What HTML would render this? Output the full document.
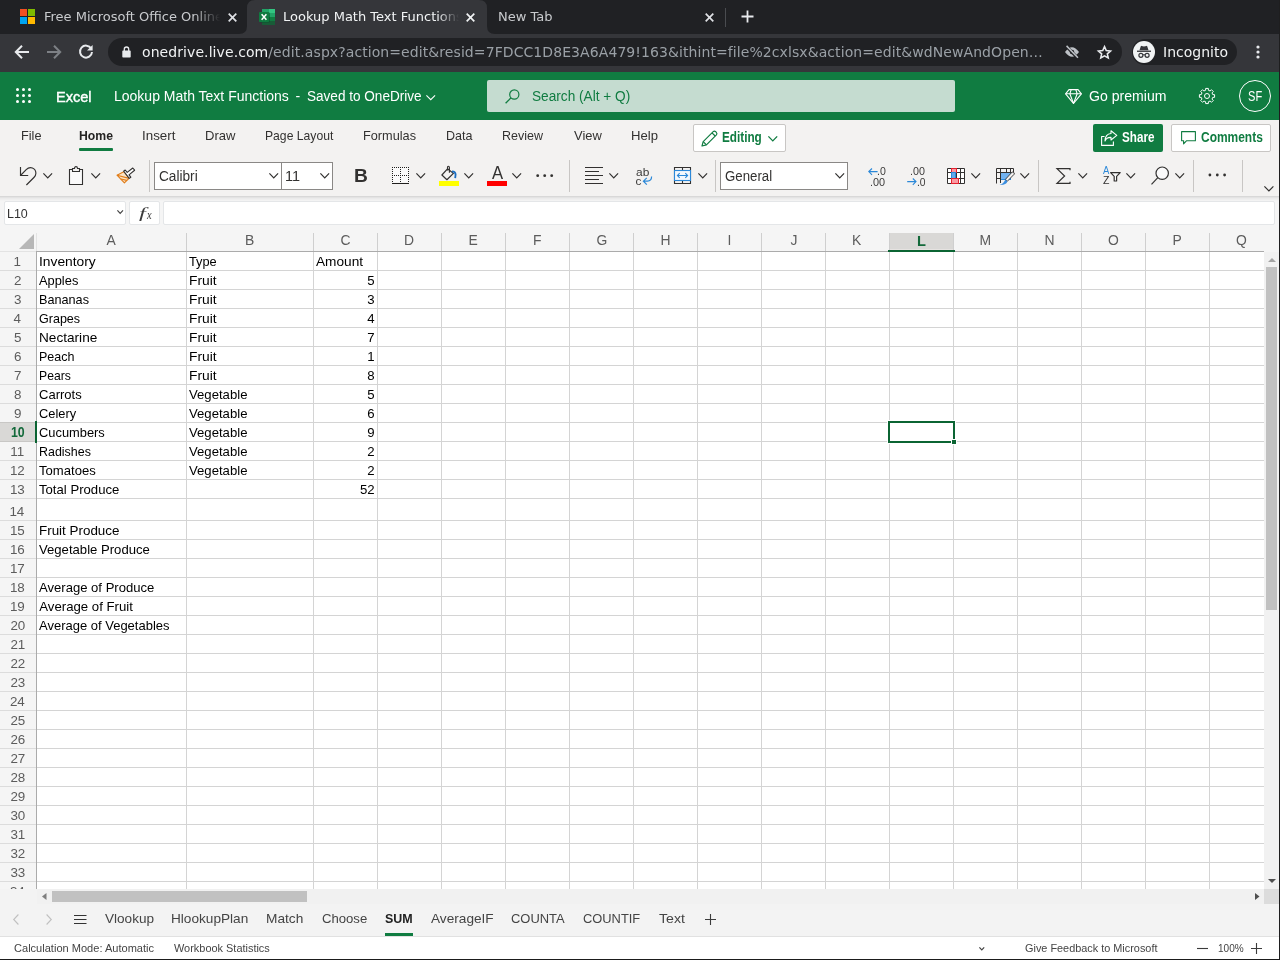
<!DOCTYPE html>
<html lang="en"><head><meta charset="utf-8"><title>Lookup Math Text Functions.xlsx - Microsoft Excel Online</title>
<style>
*{box-sizing:border-box;margin:0;padding:0}
html,body{width:1280px;height:960px;overflow:hidden;background:#fff}
body{position:relative;font-family:"Liberation Sans",sans-serif;color:#252423}
.a{position:absolute}
.t{position:absolute;white-space:pre;line-height:1}
.dj{font-family:"DejaVu Sans",sans-serif}
svg{position:absolute;overflow:visible}
/* chrome */
#tabbar{left:0;top:0;width:1280px;height:34px;background:#202124}
#toolbar{left:0;top:34px;width:1280px;height:38px;background:#35363a}
/* excel */
#xlhead{left:0;top:72px;width:1280px;height:48px;background:#107c41}
#ribbon{left:0;top:120px;width:1280px;height:76px;background:#f3f2f1}
#fbar{left:0;top:196px;width:1280px;height:37px;background:#f5f5f5}
.hl{position:absolute;height:1px;background:#d4d4d4}
.vl{position:absolute;width:1px;background:#d4d4d4}
#w{position:absolute;left:0;top:0;width:1280px;height:960px;overflow:hidden;will-change:transform}
</style></head><body><div id="w">

<!-- ===== Browser chrome ===== -->
<div class="a" id="tabbar"></div>
<div class="a" id="toolbar"></div>
<!-- active tab -->
<svg style="left:239px;top:0" width="256" height="34" viewBox="0 0 256 34"><path d="M0 34 Q8 34 8 26 V8 Q8 0 16 0 H240 Q248 0 248 8 V26 Q248 34 256 34 Z" fill="#35363a"/></svg>
<!-- tab 1 -->
<svg style="left:20px;top:9px" width="15" height="15" viewBox="0 0 15 15"><rect x="0" y="0" width="7" height="7" fill="#f25022"/><rect x="8" y="0" width="7" height="7" fill="#7fba00"/><rect x="0" y="8" width="7" height="7" fill="#00a4ef"/><rect x="8" y="8" width="7" height="7" fill="#ffb900"/></svg>
<div class="a" style="left:44px;top:0;width:176px;height:34px;overflow:hidden"><span class="t dj" style="left:0;top:10px;font-size:13px;color:#c9cbce">Free Microsoft Office Online</span><div class="a" style="right:0;top:0;width:26px;height:34px;background:linear-gradient(90deg,rgba(32,33,36,0),#202124)"></div></div>
<svg style="left:228px;top:13px" width="9" height="9" viewBox="0 0 9 9"><path d="M0.7 0.7 L8.3 8.3 M8.3 0.7 L0.7 8.3" stroke="#dfe1e5" stroke-width="1.7"/></svg>
<!-- tab 2 -->
<svg style="left:259px;top:9px" width="16" height="16" viewBox="0 0 16 16">
<rect x="3" y="0" width="7" height="4" fill="#21a366"/><rect x="10" y="0" width="6" height="4" fill="#33c481"/>
<rect x="3" y="4" width="7" height="4" fill="#107c41"/><rect x="10" y="4" width="6" height="4" fill="#21a366"/>
<rect x="3" y="8" width="7" height="4" fill="#185c37"/><rect x="10" y="8" width="6" height="4" fill="#107c41"/>
<rect x="3" y="12" width="13" height="4" fill="#185c37"/>
<rect x="1" y="3.600" width="10" height="10" rx="0.800" fill="#0a4a2b" opacity="0.550"/>
<rect x="0" y="3" width="10" height="10" rx="0.800" fill="#0f7a40"/>
<path d="M2.600 5.300 L7.400 10.700 M7.400 5.300 L2.600 10.700" stroke="#fff" stroke-width="1.500"/>
</svg>
<div class="a" style="left:283px;top:0;width:176px;height:34px;overflow:hidden"><span class="t dj" style="left:0;top:10px;font-size:13px;color:#f1f3f4">Lookup Math Text Functions</span><div class="a" style="right:0;top:0;width:22px;height:34px;background:linear-gradient(90deg,rgba(53,54,58,0),#35363a)"></div></div>
<svg style="left:466px;top:13px" width="9" height="9" viewBox="0 0 9 9"><path d="M0.7 0.7 L8.3 8.3 M8.3 0.7 L0.7 8.3" stroke="#f1f3f4" stroke-width="1.7"/></svg>
<!-- tab 3 -->
<span class="t dj" style="left:498px;top:10px;font-size:13px;color:#c9cbce">New Tab</span>
<svg style="left:705px;top:13px" width="9" height="9" viewBox="0 0 9 9"><path d="M0.7 0.7 L8.3 8.3 M8.3 0.7 L0.7 8.3" stroke="#dfe1e5" stroke-width="1.7"/></svg>
<div class="a" style="left:725px;top:8px;width:1px;height:19px;background:#4a4c50"></div>
<svg style="left:741px;top:10px" width="13" height="13" viewBox="0 0 13 13"><path d="M6.500 0.500 V12.500 M0.500 6.500 H12.500" stroke="#e8eaed" stroke-width="1.800"/></svg>
<!-- toolbar -->
<svg style="left:14px;top:44px" width="16" height="16" viewBox="0 0 16 16"><path d="M15 8 H2.500 M8 1.800 L1.800 8 L8 14.200" fill="none" stroke="#e8eaed" stroke-width="2"/></svg>
<svg style="left:46px;top:44px" width="16" height="16" viewBox="0 0 16 16"><path d="M1 8 H13.500 M8 1.800 L14.200 8 L8 14.200" fill="none" stroke="#7d8085" stroke-width="2"/></svg>
<svg style="left:78px;top:44px" width="16" height="16" viewBox="0 0 16 16"><path d="M13.200 4.600 A6 6 0 1 0 14 8" fill="none" stroke="#e8eaed" stroke-width="2"/><path d="M14.600 1 V6.600 H9 Z" fill="#e8eaed"/></svg>
<div class="a" style="left:108px;top:38px;width:1014px;height:28px;border-radius:14px;background:#202124"></div>
<svg style="left:122px;top:45.500px" width="9" height="12" viewBox="0 0 9 12"><rect x="0.300" y="4.600" width="8.400" height="7" rx="0.800" fill="#e8eaed"/><path d="M2.300 5 V3.200 A2.200 2.200 0 0 1 6.700 3.200 V5" fill="none" stroke="#e8eaed" stroke-width="1.300"/></svg>
<span class="t dj" style="left:142px;top:45.4px;font-size:14px;color:#9aa0a6;letter-spacing:0.08px"><span style="color:#f1f3f4">onedrive.live.com</span>/edit.aspx?action=edit&amp;resid=7FDCC1D8E3A6A479!163&amp;ithint=file%2cxlsx&amp;action=edit&amp;wdNewAndOpen…</span>
<!-- eye-off icon -->
<svg style="left:1064px;top:45px" width="16" height="14" viewBox="0 0 18 16"><path d="M1 8 Q5 2.500 9 2.500 Q13 2.500 17 8 Q13 13.500 9 13.500 Q5 13.500 1 8Z" fill="#bdc1c6"/><circle cx="9" cy="8" r="2.600" fill="#202124"/><path d="M2 0.800 L15.500 15" stroke="#202124" stroke-width="3.400"/><path d="M2.800 1 L15.800 14.600" stroke="#bdc1c6" stroke-width="1.700"/></svg>
<!-- star -->
<svg style="left:1096.500px;top:44.700px" width="15" height="14.500" viewBox="0 0 18 17"><path d="M9 1.800 L11.100 6.500 L16.200 7 L12.400 10.400 L13.500 15.400 L9 12.800 L4.500 15.400 L5.600 10.400 L1.800 7 L6.900 6.500 Z" fill="none" stroke="#e8eaed" stroke-width="1.900" stroke-linejoin="miter"/></svg>
<!-- incognito chip -->
<div class="a" style="left:1132px;top:39px;width:105px;height:26px;border-radius:13px;background:#202124"></div>
<svg style="left:1133px;top:41px" width="22" height="22" viewBox="0 0 22 22"><circle cx="11" cy="11" r="11" fill="#f1f3f4"/><path d="M6.500 9.300 L7.800 5.300 Q8 4.700 8.600 4.900 L11 5.600 L13.400 4.900 Q14 4.700 14.200 5.300 L15.500 9.300 Z" fill="#35363a"/><rect x="4" y="9.600" width="14" height="1.300" fill="#35363a"/><circle cx="7.900" cy="14.300" r="2" fill="none" stroke="#35363a" stroke-width="1.200"/><circle cx="14.100" cy="14.300" r="2" fill="none" stroke="#35363a" stroke-width="1.200"/><path d="M9.900 14 Q11 13.300 12.100 14" fill="none" stroke="#35363a" stroke-width="1"/></svg>
<span class="t dj" style="left:1163px;top:45.4px;font-size:14px;color:#f1f3f4">Incognito</span>
<svg style="left:1255.500px;top:45px" width="4" height="14" viewBox="0 0 4 14"><circle cx="2" cy="2" r="1.600" fill="#e8eaed"/><circle cx="2" cy="7" r="1.600" fill="#e8eaed"/><circle cx="2" cy="12" r="1.600" fill="#e8eaed"/></svg>

<!-- ===== Excel header ===== -->
<div class="a" id="xlhead"></div>
<svg style="left:15px;top:87px" width="17" height="17" viewBox="0 0 17 17" fill="#fff"><circle cx="2.500" cy="2.500" r="1.500"/><circle cx="8.500" cy="2.500" r="1.500"/><circle cx="14.500" cy="2.500" r="1.500"/><circle cx="2.500" cy="8.500" r="1.500"/><circle cx="8.500" cy="8.500" r="1.500"/><circle cx="14.500" cy="8.500" r="1.500"/><circle cx="2.500" cy="14.500" r="1.500"/><circle cx="8.500" cy="14.500" r="1.500"/><circle cx="14.500" cy="14.500" r="1.500"/></svg>
<span class="t" style="left:55.93px;top:88.60px;font-size:15px;color:#fff;transform:scaleX(0.9704);transform-origin:0 0;-webkit-text-stroke:0.4px #fff;">Excel</span>
<span class="t" style="left:114.00px;top:89.45px;font-size:14px;color:#fff;">Lookup Math Text Functions</span>
<span class="t" style="left:295.50px;top:89.45px;font-size:14px;color:#fff;">-</span>
<span class="t" style="left:307.00px;top:89.45px;font-size:14px;color:#fff;transform:scaleX(0.9688);transform-origin:0 0;">Saved to OneDrive</span>
<svg style="left:426px;top:94.5px" width="9.5" height="5.2" viewBox="0 0 9.5 5.2"><path d="M0.4 0.4 L4.75 4.7 L9.1 0.4" fill="none" stroke="#fff" stroke-width="1.1"/></svg>
<div class="a" style="left:487px;top:80px;width:468px;height:32px;border-radius:2px;background:#c5dcd0"></div>
<svg style="left:505px;top:89px" width="15" height="15" viewBox="0 0 15 15"><circle cx="9.300" cy="5.500" r="4.600" fill="none" stroke="#107c41" stroke-width="1.200"/><path d="M6 8.800 L0.600 14.200" stroke="#107c41" stroke-width="1.300"/></svg>
<span class="t" style="left:532.00px;top:89.15px;font-size:14px;color:#107c41;transform:scaleX(0.9751);transform-origin:0 0;">Search (Alt + Q)</span>
<svg style="left:1065px;top:89px" width="17" height="15" viewBox="0 0 17 15" fill="none" stroke="#fff" stroke-width="1.100" stroke-linejoin="round"><path d="M4 0.600 H13 L16.400 4.800 L8.500 14.400 L0.600 4.800 Z"/><path d="M0.600 4.800 H16.400 M6.200 0.600 L4.800 4.800 L8.500 14.400 L12.200 4.800 L10.800 0.600"/></svg>
<span class="t" style="left:1088.80px;top:88.95px;font-size:14px;color:#fff;transform:scaleX(1.0058);transform-origin:0 0;">Go premium</span>
<svg style="left:1197px;top:86px" width="20" height="20" viewBox="0 0 20 20"><path d="M17.59 8.68 L17.59 11.32 L15.74 11.38 L15.03 13.08 L16.30 14.43 L14.43 16.30 L13.08 15.03 L11.38 15.74 L11.32 17.59 L8.68 17.59 L8.62 15.74 L6.92 15.03 L5.57 16.30 L3.70 14.43 L4.97 13.08 L4.26 11.38 L2.41 11.32 L2.41 8.68 L4.26 8.62 L4.97 6.92 L3.70 5.57 L5.57 3.70 L6.92 4.97 L8.62 4.26 L8.68 2.41 L11.32 2.41 L11.38 4.26 L13.08 4.97 L14.43 3.70 L16.30 5.57 L15.03 6.92 L15.74 8.62Z" fill="none" stroke="#fff" stroke-width="1.0" stroke-linejoin="round"/><circle cx="10" cy="10" r="2.5" fill="none" stroke="#fff" stroke-width="1.0"/></svg>
<div class="a" style="left:1239px;top:80px;width:32px;height:32px;border-radius:16px;border:1px solid #fff"></div>
<span class="t" style="left:1248.30px;top:89.35px;font-size:14px;color:#fff;transform:scaleX(0.7902);transform-origin:0 0;">SF</span>

<!-- ===== Ribbon ===== -->
<div class="a" id="fbar"></div>
<div class="a" style="left:0;top:196px;width:1280px;height:5px;background:linear-gradient(180deg,rgba(0,0,0,0.14),rgba(0,0,0,0.05) 40%,rgba(0,0,0,0))"></div>
<div class="a" id="ribbon"></div>
<span class="t" style="left:21.26px;top:128.77px;font-size:13.5px;color:#323130;transform:scaleX(0.9434);transform-origin:0 0;">File</span>
<span class="t" style="left:79.00px;top:128.77px;font-size:13.5px;color:#252423;font-weight:700;transform:scaleX(0.9053);transform-origin:0 0;">Home</span>
<span class="t" style="left:142.31px;top:128.77px;font-size:13.5px;color:#323130;transform:scaleX(0.9905);transform-origin:0 0;">Insert</span>
<span class="t" style="left:205.33px;top:128.77px;font-size:13.5px;color:#323130;transform:scaleX(0.9658);transform-origin:0 0;">Draw</span>
<span class="t" style="left:265.10px;top:128.77px;font-size:13.5px;color:#323130;transform:scaleX(0.9006);transform-origin:0 0;">Page Layout</span>
<span class="t" style="left:363.36px;top:128.77px;font-size:13.5px;color:#323130;transform:scaleX(0.9422);transform-origin:0 0;">Formulas</span>
<span class="t" style="left:445.87px;top:128.77px;font-size:13.5px;color:#323130;transform:scaleX(0.9283);transform-origin:0 0;">Data</span>
<span class="t" style="left:502.37px;top:128.77px;font-size:13.5px;color:#323130;transform:scaleX(0.9261);transform-origin:0 0;">Review</span>
<span class="t" style="left:573.60px;top:128.77px;font-size:13.5px;color:#323130;transform:scaleX(0.9567);transform-origin:0 0;">View</span>
<span class="t" style="left:631.33px;top:128.77px;font-size:13.5px;color:#323130;transform:scaleX(0.9712);transform-origin:0 0;">Help</span>
<div class="a" style="left:79px;top:148px;width:34px;height:3px;background:#107c41;border-radius:1px"></div>
<div class="a" style="left:693px;top:124px;width:93px;height:28px;background:#fff;border:1px solid #c8c6c4;border-radius:2px"></div>
<svg style="left:701px;top:130px" width="17" height="17" viewBox="0 0 17 17" fill="none" stroke="#107c41" stroke-width="1.200" stroke-linejoin="round"><path d="M1 16 L2.200 11.600 L12.200 1.600 Q13.400 0.500 14.700 1.700 L15.300 2.300 Q16.500 3.600 15.400 4.800 L5.400 14.800 Z"/><path d="M2.200 11.600 L5.400 14.800 M11 2.800 L14.200 6"/></svg>
<span class="t" style="left:722.30px;top:130.35px;font-size:14px;color:#107c41;font-weight:700;transform:scaleX(0.8383);transform-origin:0 0;">Editing</span>
<svg style="left:768px;top:135.6px" width="9.6" height="5.4" viewBox="0 0 9.6 5.4"><path d="M0.4 0.4 L4.8 4.9 L9.2 0.4" fill="none" stroke="#107c41" stroke-width="1.3"/></svg>
<div class="a" style="left:1093px;top:124px;width:70px;height:28px;background:#107c41;border-radius:2px"></div>
<svg style="left:1101px;top:130px" width="17" height="16" viewBox="0 0 17 16" fill="none" stroke="#fff" stroke-width="1.100" stroke-linejoin="round"><path d="M3.500 6.500 H0.600 V15.400 H12.400 V11.500"/><path d="M10 0.800 L15.800 5.400 L10 10 V7.400 Q5.500 7.200 4 11 Q4.200 4 10 3.500 Z"/></svg>
<span class="t" style="left:1122.20px;top:130.05px;font-size:14px;color:#fff;font-weight:700;transform:scaleX(0.8332);transform-origin:0 0;">Share</span>
<div class="a" style="left:1171px;top:124px;width:100px;height:28px;background:#fff;border:1px solid #c8c6c4;border-radius:2px"></div>
<svg style="left:1181px;top:131px" width="15" height="14" viewBox="0 0 15 14" fill="none" stroke="#107c41" stroke-width="1.100" stroke-linejoin="round"><path d="M0.600 0.600 H14.400 V9.800 H5.400 L2.600 12.800 V9.800 H0.600 Z"/></svg>
<span class="t" style="left:1200.60px;top:130.05px;font-size:14px;color:#107c41;font-weight:700;transform:scaleX(0.8545);transform-origin:0 0;">Comments</span>
<svg style="left:19px;top:166px" width="18" height="20" viewBox="0 0 18 20" ><g fill="none" stroke="#323130" stroke-width="1.150"><path d="M1.500 1 V9.500 H9.200"/><path d="M1.500 9.500 L7.200 3.600 Q10 0.800 13.400 2 Q16.900 3.500 16.900 7.300 Q16.900 9.500 14.900 11.500 L7.400 19"/></g></svg>
<svg style="left:43px;top:172.8px" width="9.5" height="5.4" viewBox="0 0 9.5 5.4"><path d="M0.4 0.4 L4.75 4.9 L9.1 0.4" fill="none" stroke="#323130" stroke-width="1.2"/></svg>
<svg style="left:68px;top:166px" width="16" height="20" viewBox="0 0 16 20" ><g fill="none" stroke="#323130" stroke-width="1.100"><path d="M4.500 3.500 H1.500 V18.500 H14.500 V3.500 H11.500" fill="#fafafa"/><path d="M4.500 5.500 V2.500 H6.500 Q6.500 0.600 8 0.600 Q9.500 0.600 9.500 2.500 H11.500 V5.500 Z" fill="#f3f2f1"/></g></svg>
<svg style="left:91px;top:172.8px" width="9.5" height="5.4" viewBox="0 0 9.5 5.4"><path d="M0.4 0.4 L4.75 4.9 L9.1 0.4" fill="none" stroke="#323130" stroke-width="1.2"/></svg>
<svg style="left:116px;top:167px" width="20" height="17" viewBox="0 0 20 17" ><g fill="none" stroke-width="1.100" stroke-linejoin="round"><path d="M1 8.200 L8.200 4.600 L13 11.400 L8.400 15.800 Z" fill="#fbe3c4" stroke="#e07b16"/><path d="M1 8.200 L13 11.400 M5 12 L10.800 13.400" stroke="#e07b16"/><path d="M7.600 4.200 L9.200 3 L11.200 5.400 L16.800 1 L18.600 3.200 L13 7.800 L14.800 10.200 L13.200 11.400 Z" fill="#fff" stroke="#323130"/></g></svg>
<div class="a" style="left:149px;top:160px;width:1px;height:32px;background:#c8c6c4"></div>
<div class="a" style="left:154px;top:162px;width:179px;height:28px;background:#fff;border:1px solid #8a8886"></div>
<div class="a" style="left:281px;top:162px;width:1px;height:28px;background:#8a8886"></div>
<span class="t" style="left:159.00px;top:168.95px;font-size:14px;color:#323130;transform:scaleX(0.9756);transform-origin:0 0;">Calibri</span>
<svg style="left:269px;top:172.8px" width="9.5" height="5.4" viewBox="0 0 9.5 5.4"><path d="M0.4 0.4 L4.75 4.9 L9.1 0.4" fill="none" stroke="#323130" stroke-width="1.2"/></svg>
<span class="t" style="left:285.27px;top:168.95px;font-size:14px;color:#323130;transform:scaleX(1.0329);transform-origin:0 0;">11</span>
<svg style="left:319.6px;top:172.8px" width="9.5" height="5.4" viewBox="0 0 9.5 5.4"><path d="M0.4 0.4 L4.75 4.9 L9.1 0.4" fill="none" stroke="#323130" stroke-width="1.2"/></svg>
<span class="t" style="left:353.71px;top:167.50px;font-size:17.6px;color:#323130;font-weight:700;transform:scaleX(1.0909);transform-origin:0 0;">B</span>
<svg style="left:392px;top:167px" width="17" height="17" viewBox="0 0 17 17" ><rect x="0.500" y="0.500" width="16" height="15" fill="#fafafa"/><g fill="#201f1e" shape-rendering="crispEdges"><rect x="0" y="0" width="1" height="1"/><rect x="0" y="8" width="1" height="1"/><rect x="2" y="0" width="1" height="1"/><rect x="2" y="8" width="1" height="1"/><rect x="4" y="0" width="1" height="1"/><rect x="4" y="8" width="1" height="1"/><rect x="6" y="0" width="1" height="1"/><rect x="6" y="8" width="1" height="1"/><rect x="8" y="0" width="1" height="1"/><rect x="8" y="8" width="1" height="1"/><rect x="10" y="0" width="1" height="1"/><rect x="10" y="8" width="1" height="1"/><rect x="12" y="0" width="1" height="1"/><rect x="12" y="8" width="1" height="1"/><rect x="14" y="0" width="1" height="1"/><rect x="14" y="8" width="1" height="1"/><rect x="16" y="0" width="1" height="1"/><rect x="16" y="8" width="1" height="1"/><rect x="0" y="2" width="1" height="1"/><rect x="8" y="2" width="1" height="1"/><rect x="16" y="2" width="1" height="1"/><rect x="0" y="4" width="1" height="1"/><rect x="8" y="4" width="1" height="1"/><rect x="16" y="4" width="1" height="1"/><rect x="0" y="6" width="1" height="1"/><rect x="8" y="6" width="1" height="1"/><rect x="16" y="6" width="1" height="1"/><rect x="0" y="10" width="1" height="1"/><rect x="8" y="10" width="1" height="1"/><rect x="16" y="10" width="1" height="1"/><rect x="0" y="12" width="1" height="1"/><rect x="8" y="12" width="1" height="1"/><rect x="16" y="12" width="1" height="1"/><rect x="0" y="14" width="1" height="1"/><rect x="8" y="14" width="1" height="1"/><rect x="16" y="14" width="1" height="1"/><rect x="0" y="16" width="17" height="1"/></g></svg>
<svg style="left:416px;top:172.8px" width="9.5" height="5.4" viewBox="0 0 9.5 5.4"><path d="M0.4 0.4 L4.75 4.9 L9.1 0.4" fill="none" stroke="#323130" stroke-width="1.2"/></svg>
<svg style="left:439px;top:165px" width="21" height="21" viewBox="0 0 21 21" ><rect x="0" y="16" width="20" height="5" fill="#ffff00"/><g fill="none" stroke-linejoin="round"><path d="M8.500 3.800 L14.400 8.400 L7.900 14.700 L2.900 10 Z" stroke="#323130" stroke-width="1.200"/><path d="M8.500 5.600 V2.500 Q8.500 1.300 9.400 1.300 Q10.400 1.300 10.400 2.500 V7.800" stroke="#323130" stroke-width="1.100"/><path d="M13 6.400 Q16.400 6.600 16.600 9.400 L16.200 13.200" stroke="#1b6ec2" stroke-width="1.800"/></g></svg>
<svg style="left:464px;top:172.8px" width="9.5" height="5.4" viewBox="0 0 9.5 5.4"><path d="M0.4 0.4 L4.75 4.9 L9.1 0.4" fill="none" stroke="#323130" stroke-width="1.2"/></svg>
<span class="t" style="left:491.60px;top:165.19px;font-size:17.5px;color:#323130;transform:scaleX(0.9500);transform-origin:0 0;">A</span>
<div class="a" style="left:487px;top:181px;width:20px;height:5px;background:#ff0000"></div>
<svg style="left:512px;top:172.8px" width="9.5" height="5.4" viewBox="0 0 9.5 5.4"><path d="M0.4 0.4 L4.75 4.9 L9.1 0.4" fill="none" stroke="#323130" stroke-width="1.2"/></svg>
<svg style="left:536px;top:174px" width="18" height="4" viewBox="0 0 18 4" ><g fill="#323130"><circle cx="1.700" cy="1.700" r="1.400"/><circle cx="8.700" cy="1.700" r="1.400"/><circle cx="15.700" cy="1.700" r="1.400"/></g></svg>
<div class="a" style="left:569px;top:160px;width:1px;height:32px;background:#c8c6c4"></div>
<svg style="left:585px;top:167px" width="18" height="17" viewBox="0 0 18 17" ><path d="M0 0.500 H18 M0 4.500 H14 M0 8.500 H18 M0 12.500 H14 M0 16.500 H18" stroke="#323130" stroke-width="1"/></svg>
<svg style="left:609px;top:172.8px" width="9.5" height="5.4" viewBox="0 0 9.5 5.4"><path d="M0.4 0.4 L4.75 4.9 L9.1 0.4" fill="none" stroke="#323130" stroke-width="1.2"/></svg>
<span class="t" style="left:635.60px;top:167.21px;font-size:11.8px;color:#3b3a39;transform:scaleX(1.0103);transform-origin:0 0;">ab</span>
<span class="t" style="left:635.60px;top:175.61px;font-size:11.8px;color:#3b3a39;">c</span>
<svg style="left:642px;top:176px" width="11" height="10" viewBox="0 0 11 10" ><path d="M9.600 0.600 Q9.600 5 5.400 5.200 H1.600 M4.800 1.800 L1.400 5.200 L4.800 8.600" fill="none" stroke="#2b88d8" stroke-width="1.200"/></svg>
<svg style="left:674px;top:167px" width="18" height="17" viewBox="0 0 18 17" ><g fill="none"><path d="M0.500 0 V17 M16.500 0 V17 M8.500 0 V3.500 M8.500 13.500 V17 M0 0.500 H17 M0 16.500 H17" stroke="#323130" stroke-width="1.100"/><rect x="0.500" y="3.500" width="16" height="10" fill="#f3f8fd" stroke="#2b88d8" stroke-width="1.100"/><path d="M3.400 8.500 H13.600 M5.700 6.200 L3.400 8.500 L5.700 10.800 M11.300 6.200 L13.600 8.500 L11.300 10.800" stroke="#2b88d8" stroke-width="1.100"/></g></svg>
<svg style="left:698px;top:172.8px" width="9.5" height="5.4" viewBox="0 0 9.5 5.4"><path d="M0.4 0.4 L4.75 4.9 L9.1 0.4" fill="none" stroke="#323130" stroke-width="1.2"/></svg>
<div class="a" style="left:715px;top:160px;width:1px;height:32px;background:#c8c6c4"></div>
<div class="a" style="left:720px;top:162px;width:128px;height:28px;background:#fff;border:1px solid #8a8886"></div>
<span class="t" style="left:725.30px;top:169.15px;font-size:14px;color:#323130;transform:scaleX(0.9457);transform-origin:0 0;">General</span>
<svg style="left:835px;top:172.8px" width="9.5" height="5.4" viewBox="0 0 9.5 5.4"><path d="M0.4 0.4 L4.75 4.9 L9.1 0.4" fill="none" stroke="#323130" stroke-width="1.2"/></svg>
<svg style="left:868px;top:168px" width="10" height="8" viewBox="0 0 10 8" ><path d="M9.600 3.600 H0.800 M4 0.500 L0.800 3.600 L4 6.800" fill="none" stroke="#2b88d8" stroke-width="1.100"/></svg>
<span class="t" style="left:876.60px;top:166.46px;font-size:10.8px;color:#3b3a39;transform:scaleX(0.9778);transform-origin:0 0;">.0</span>
<span class="t" style="left:870.30px;top:176.66px;font-size:10.8px;color:#3b3a39;transform:scaleX(1.0064);transform-origin:0 0;">.00</span>
<span class="t" style="left:910.30px;top:166.46px;font-size:10.8px;color:#3b3a39;transform:scaleX(0.9930);transform-origin:0 0;">.00</span>
<svg style="left:907px;top:178px" width="10" height="8" viewBox="0 0 10 8" ><path d="M0.200 3.600 H9 M5.800 0.500 L9 3.600 L5.800 6.800" fill="none" stroke="#2b88d8" stroke-width="1.100"/></svg>
<span class="t" style="left:916.60px;top:176.66px;font-size:10.8px;color:#3b3a39;transform:scaleX(0.9556);transform-origin:0 0;">.0</span>
<svg style="left:947px;top:168px" width="18" height="16" viewBox="0 0 18 16" ><rect x="0.500" y="0.500" width="17" height="15" fill="#fff"/><path d="M0.500 0.500 H17.500 V15.500 H0.500 Z M4.500 0.500 V15.500 M9.500 0.500 V15.500 M13.500 0.500 V15.500 M0.500 4.500 H17.500 M0.500 10.500 H17.500" fill="none" stroke="#323130" stroke-width="1"/><rect x="4.500" y="0.500" width="5" height="4" fill="#f89aa2" stroke="#e5202e" stroke-width="1"/><rect x="4.500" y="4.500" width="4" height="6" fill="#62aaec" stroke="#2b88d8" stroke-width="1"/><rect x="4.500" y="10.500" width="7" height="5" fill="#f89aa2" stroke="#e5202e" stroke-width="1"/></svg>
<svg style="left:971px;top:172.8px" width="9.5" height="5.4" viewBox="0 0 9.5 5.4"><path d="M0.4 0.4 L4.75 4.9 L9.1 0.4" fill="none" stroke="#323130" stroke-width="1.2"/></svg>
<svg style="left:996px;top:168px" width="19" height="18" viewBox="0 0 19 18" ><rect x="4.500" y="4.500" width="10" height="7" fill="#71b2f0" stroke="#2b88d8" stroke-width="1"/><path d="M0.500 0.500 H17.500 V4.500 M0.500 0.500 V15.500 M4.500 0.500 V15 M10.500 0.500 V4.500 M14.500 0.500 V4.500 M0.500 4.500 H17.500 M0.500 10.500 H4.500" fill="none" stroke="#323130" stroke-width="1"/><path d="M17.200 4.200 Q18.800 4.600 18.200 6.200 L11.400 13.200 L9.400 11.400 L15.600 4.600 Q16.400 3.800 17.200 4.200 Z" fill="#f3f2f1" stroke="#323130" stroke-width="0.900"/><path d="M9.400 11.400 L11.400 13.200 Q10.500 17.300 3.500 17 Q7.800 15.400 9.400 11.400Z" fill="#3a8ee0"/></svg>
<svg style="left:1020px;top:172.8px" width="9.5" height="5.4" viewBox="0 0 9.5 5.4"><path d="M0.4 0.4 L4.75 4.9 L9.1 0.4" fill="none" stroke="#323130" stroke-width="1.2"/></svg>
<div class="a" style="left:1038px;top:160px;width:1px;height:32px;background:#c8c6c4"></div>
<svg style="left:1056px;top:168px" width="15" height="16" viewBox="0 0 15 16" ><path d="M14 2.200 V0.600 H1 L8.600 8 L1 15.400 H14 V13.800" fill="none" stroke="#323130" stroke-width="1.200" stroke-linejoin="miter"/></svg>
<svg style="left:1078px;top:172.8px" width="9.5" height="5.4" viewBox="0 0 9.5 5.4"><path d="M0.4 0.4 L4.75 4.9 L9.1 0.4" fill="none" stroke="#323130" stroke-width="1.2"/></svg>
<span class="t" style="left:1102.80px;top:165.12px;font-size:11.2px;color:#2b88d8;transform:scaleX(0.8500);transform-origin:0 0;">A</span>
<span class="t" style="left:1103.00px;top:175.42px;font-size:11.2px;color:#323130;transform:scaleX(0.9429);transform-origin:0 0;">Z</span>
<svg style="left:1110px;top:172px" width="11" height="10" viewBox="0 0 11 10" ><path d="M0.600 0.700 H10.200 L6.600 4.400 V9 H4.200 V4.400 Z" fill="#fafafa" stroke="#323130" stroke-width="1.200" stroke-linejoin="round"/></svg>
<svg style="left:1126px;top:172.8px" width="9.5" height="5.4" viewBox="0 0 9.5 5.4"><path d="M0.4 0.4 L4.75 4.9 L9.1 0.4" fill="none" stroke="#323130" stroke-width="1.2"/></svg>
<svg style="left:1151px;top:166px" width="18" height="19" viewBox="0 0 18 19" ><circle cx="11.200" cy="7.200" r="6.200" fill="#fafafa" stroke="#323130" stroke-width="1.200"/><path d="M6.800 11.700 L0.500 18.300" stroke="#323130" stroke-width="1.200"/></svg>
<svg style="left:1175px;top:172.8px" width="9.5" height="5.4" viewBox="0 0 9.5 5.4"><path d="M0.4 0.4 L4.75 4.9 L9.1 0.4" fill="none" stroke="#323130" stroke-width="1.2"/></svg>
<div class="a" style="left:1193px;top:160px;width:1px;height:32px;background:#c8c6c4"></div>
<svg style="left:1208px;top:173px" width="18" height="4" viewBox="0 0 18 4" ><g fill="#323130"><circle cx="1.900" cy="2" r="1.400"/><circle cx="9.300" cy="2" r="1.400"/><circle cx="16.600" cy="2" r="1.400"/></g></svg>
<div class="a" style="left:1242px;top:160px;width:1px;height:32px;background:#c8c6c4"></div>
<svg style="left:1263.5px;top:185.6px" width="9.8" height="5.4" viewBox="0 0 9.8 5.4"><path d="M0.4 0.4 L4.9 4.9 L9.4 0.4" fill="none" stroke="#323130" stroke-width="1.2"/></svg>
<div class="a" style="left:4px;top:201px;width:122px;height:24px;background:#fff;border:1px solid #e4e6e8;border-radius:2px"></div>
<div class="a" style="left:129px;top:201px;width:31px;height:24px;background:#fff;border:1px solid #e4e6e8;border-radius:2px"></div>
<div class="a" style="left:163px;top:201px;width:1112px;height:24px;background:#fff;border:1px solid #e4e6e8;border-radius:2px"></div>
<span class="t" style="left:6.69px;top:207.50px;font-size:12.4px;color:#333;transform:scaleX(1.0060);transform-origin:0 0;">L10</span>
<svg style="left:116.6px;top:210px" width="6.4" height="3.8" viewBox="0 0 6.4 3.8"><path d="M0.4 0.4 L3.2 3.3 L6.0 0.4" fill="none" stroke="#444" stroke-width="1.2"/></svg>
<span class="t" style="left:139.20px;top:205.50px;font-size:15px;color:#3b3b3b;font-style:italic;font-family:'Liberation Serif',sans-serif;transform:scaleX(1.6333);transform-origin:0 0;">f</span>
<span class="t" style="left:146.60px;top:208.20px;font-size:13px;color:#3b3b3b;font-style:italic;font-family:'Liberation Serif',sans-serif;transform:scaleX(0.8000);transform-origin:0 0;">x</span>

<!-- ===== Grid ===== -->
<div class="a" style="left:37px;top:252px;width:1227px;height:637px;background:#fff"></div>
<div class="a" style="left:0;top:229px;width:1279px;height:23px;background:#f5f5f5"></div>
<div class="a" style="left:0;top:251px;width:36px;height:638px;background:#f5f5f5"></div>
<div class="a" style="left:890px;top:233px;width:63px;height:17px;background:#e6e3e1"></div><div class="a" style="left:890px;top:233px;width:63px;height:16px;background:#d9d8d6"></div>
<div class="a" style="left:0;top:422px;width:35px;height:20px;background:#c9c8c6"></div><div class="a" style="left:0;top:423px;width:35px;height:18px;background:#d9d8d6"></div>
<div class="a" style="left:0;top:229px;width:1264px;height:660px;overflow:hidden">
<div class="hl" style="left:0;top:22px;width:36px;background:#e3e3e3"></div><div class="hl" style="left:36px;top:22px;width:1228px;background:#ababab"></div><div class="hl" style="left:0;top:41px;width:36px;background:#dcdcdc"></div><div class="hl" style="left:37px;top:41px;width:1227px;background:#d4d4d4"></div><div class="hl" style="left:0;top:60px;width:36px;background:#dcdcdc"></div><div class="hl" style="left:37px;top:60px;width:1227px;background:#d4d4d4"></div><div class="hl" style="left:0;top:79px;width:36px;background:#dcdcdc"></div><div class="hl" style="left:37px;top:79px;width:1227px;background:#d4d4d4"></div><div class="hl" style="left:0;top:98px;width:36px;background:#dcdcdc"></div><div class="hl" style="left:37px;top:98px;width:1227px;background:#d4d4d4"></div><div class="hl" style="left:0;top:117px;width:36px;background:#dcdcdc"></div><div class="hl" style="left:37px;top:117px;width:1227px;background:#d4d4d4"></div><div class="hl" style="left:0;top:136px;width:36px;background:#dcdcdc"></div><div class="hl" style="left:37px;top:136px;width:1227px;background:#d4d4d4"></div><div class="hl" style="left:0;top:155px;width:36px;background:#dcdcdc"></div><div class="hl" style="left:37px;top:155px;width:1227px;background:#d4d4d4"></div><div class="hl" style="left:0;top:174px;width:36px;background:#dcdcdc"></div><div class="hl" style="left:37px;top:174px;width:1227px;background:#d4d4d4"></div><div class="hl" style="left:0;top:193px;width:36px;background:#c8c7c5"></div><div class="hl" style="left:37px;top:193px;width:1227px;background:#d4d4d4"></div><div class="hl" style="left:0;top:212px;width:36px;background:#c8c7c5"></div><div class="hl" style="left:37px;top:212px;width:1227px;background:#d4d4d4"></div><div class="hl" style="left:0;top:231px;width:36px;background:#dcdcdc"></div><div class="hl" style="left:37px;top:231px;width:1227px;background:#d4d4d4"></div><div class="hl" style="left:0;top:250px;width:36px;background:#dcdcdc"></div><div class="hl" style="left:37px;top:250px;width:1227px;background:#d4d4d4"></div><div class="hl" style="left:0;top:269px;width:36px;background:#dcdcdc"></div><div class="hl" style="left:37px;top:269px;width:1227px;background:#d4d4d4"></div><div class="hl" style="left:0;top:291px;width:36px;background:#dcdcdc"></div><div class="hl" style="left:37px;top:291px;width:1227px;background:#d4d4d4"></div><div class="hl" style="left:0;top:310px;width:36px;background:#dcdcdc"></div><div class="hl" style="left:37px;top:310px;width:1227px;background:#d4d4d4"></div><div class="hl" style="left:0;top:329px;width:36px;background:#dcdcdc"></div><div class="hl" style="left:37px;top:329px;width:1227px;background:#d4d4d4"></div><div class="hl" style="left:0;top:348px;width:36px;background:#dcdcdc"></div><div class="hl" style="left:37px;top:348px;width:1227px;background:#d4d4d4"></div><div class="hl" style="left:0;top:367px;width:36px;background:#dcdcdc"></div><div class="hl" style="left:37px;top:367px;width:1227px;background:#d4d4d4"></div><div class="hl" style="left:0;top:386px;width:36px;background:#dcdcdc"></div><div class="hl" style="left:37px;top:386px;width:1227px;background:#d4d4d4"></div><div class="hl" style="left:0;top:405px;width:36px;background:#dcdcdc"></div><div class="hl" style="left:37px;top:405px;width:1227px;background:#d4d4d4"></div><div class="hl" style="left:0;top:424px;width:36px;background:#dcdcdc"></div><div class="hl" style="left:37px;top:424px;width:1227px;background:#d4d4d4"></div><div class="hl" style="left:0;top:443px;width:36px;background:#dcdcdc"></div><div class="hl" style="left:37px;top:443px;width:1227px;background:#d4d4d4"></div><div class="hl" style="left:0;top:462px;width:36px;background:#dcdcdc"></div><div class="hl" style="left:37px;top:462px;width:1227px;background:#d4d4d4"></div><div class="hl" style="left:0;top:481px;width:36px;background:#dcdcdc"></div><div class="hl" style="left:37px;top:481px;width:1227px;background:#d4d4d4"></div><div class="hl" style="left:0;top:500px;width:36px;background:#dcdcdc"></div><div class="hl" style="left:37px;top:500px;width:1227px;background:#d4d4d4"></div><div class="hl" style="left:0;top:519px;width:36px;background:#dcdcdc"></div><div class="hl" style="left:37px;top:519px;width:1227px;background:#d4d4d4"></div><div class="hl" style="left:0;top:538px;width:36px;background:#dcdcdc"></div><div class="hl" style="left:37px;top:538px;width:1227px;background:#d4d4d4"></div><div class="hl" style="left:0;top:557px;width:36px;background:#dcdcdc"></div><div class="hl" style="left:37px;top:557px;width:1227px;background:#d4d4d4"></div><div class="hl" style="left:0;top:576px;width:36px;background:#dcdcdc"></div><div class="hl" style="left:37px;top:576px;width:1227px;background:#d4d4d4"></div><div class="hl" style="left:0;top:595px;width:36px;background:#dcdcdc"></div><div class="hl" style="left:37px;top:595px;width:1227px;background:#d4d4d4"></div><div class="hl" style="left:0;top:614px;width:36px;background:#dcdcdc"></div><div class="hl" style="left:37px;top:614px;width:1227px;background:#d4d4d4"></div><div class="hl" style="left:0;top:633px;width:36px;background:#dcdcdc"></div><div class="hl" style="left:37px;top:633px;width:1227px;background:#d4d4d4"></div><div class="hl" style="left:0;top:652px;width:36px;background:#dcdcdc"></div><div class="hl" style="left:37px;top:652px;width:1227px;background:#d4d4d4"></div>
<div class="vl" style="left:36px;top:4px;height:18px;background:#e3e3e3"></div><div class="vl" style="left:36px;top:22px;height:638px;background:#ababab"></div><div class="vl" style="left:186px;top:4px;height:18px;background:#cfcfcf"></div><div class="vl" style="left:186px;top:23px;height:637px;background:#d4d4d4"></div><div class="vl" style="left:313px;top:4px;height:18px;background:#cfcfcf"></div><div class="vl" style="left:313px;top:23px;height:637px;background:#d4d4d4"></div><div class="vl" style="left:377px;top:4px;height:18px;background:#cfcfcf"></div><div class="vl" style="left:377px;top:23px;height:637px;background:#d4d4d4"></div><div class="vl" style="left:441px;top:4px;height:18px;background:#cfcfcf"></div><div class="vl" style="left:441px;top:23px;height:637px;background:#d4d4d4"></div><div class="vl" style="left:505px;top:4px;height:18px;background:#cfcfcf"></div><div class="vl" style="left:505px;top:23px;height:637px;background:#d4d4d4"></div><div class="vl" style="left:569px;top:4px;height:18px;background:#cfcfcf"></div><div class="vl" style="left:569px;top:23px;height:637px;background:#d4d4d4"></div><div class="vl" style="left:633px;top:4px;height:18px;background:#cfcfcf"></div><div class="vl" style="left:633px;top:23px;height:637px;background:#d4d4d4"></div><div class="vl" style="left:697px;top:4px;height:18px;background:#cfcfcf"></div><div class="vl" style="left:697px;top:23px;height:637px;background:#d4d4d4"></div><div class="vl" style="left:761px;top:4px;height:18px;background:#cfcfcf"></div><div class="vl" style="left:761px;top:23px;height:637px;background:#d4d4d4"></div><div class="vl" style="left:825px;top:4px;height:18px;background:#cfcfcf"></div><div class="vl" style="left:825px;top:23px;height:637px;background:#d4d4d4"></div><div class="vl" style="left:889px;top:4px;height:18px;background:#cfcfcf"></div><div class="vl" style="left:889px;top:23px;height:637px;background:#d4d4d4"></div><div class="vl" style="left:953px;top:4px;height:18px;background:#cfcfcf"></div><div class="vl" style="left:953px;top:23px;height:637px;background:#d4d4d4"></div><div class="vl" style="left:1017px;top:4px;height:18px;background:#cfcfcf"></div><div class="vl" style="left:1017px;top:23px;height:637px;background:#d4d4d4"></div><div class="vl" style="left:1081px;top:4px;height:18px;background:#cfcfcf"></div><div class="vl" style="left:1081px;top:23px;height:637px;background:#d4d4d4"></div><div class="vl" style="left:1145px;top:4px;height:18px;background:#cfcfcf"></div><div class="vl" style="left:1145px;top:23px;height:637px;background:#d4d4d4"></div><div class="vl" style="left:1209px;top:4px;height:18px;background:#cfcfcf"></div><div class="vl" style="left:1209px;top:23px;height:637px;background:#d4d4d4"></div>
</div>
<svg style="left:19px;top:234px" width="15" height="15" viewBox="0 0 15 15"><path d="M15 0 V15 H0 Z" fill="#b7b7b7"/></svg>
<span class="t" style="left:106.50px;top:234.33px;font-size:13.9px;color:#5c5c5c;">A</span>
<span class="t" style="left:245.00px;top:234.33px;font-size:13.9px;color:#5c5c5c;">B</span>
<span class="t" style="left:340.50px;top:234.33px;font-size:13.9px;color:#5c5c5c;">C</span>
<span class="t" style="left:404.00px;top:234.33px;font-size:13.9px;color:#5c5c5c;">D</span>
<span class="t" style="left:468.50px;top:234.33px;font-size:13.9px;color:#5c5c5c;">E</span>
<span class="t" style="left:533.00px;top:234.33px;font-size:13.9px;color:#5c5c5c;">F</span>
<span class="t" style="left:596.50px;top:234.33px;font-size:13.9px;color:#5c5c5c;">G</span>
<span class="t" style="left:660.50px;top:234.33px;font-size:13.9px;color:#5c5c5c;">H</span>
<span class="t" style="left:727.50px;top:234.33px;font-size:13.9px;color:#5c5c5c;">I</span>
<span class="t" style="left:790.50px;top:234.33px;font-size:13.9px;color:#5c5c5c;">J</span>
<span class="t" style="left:852.00px;top:234.33px;font-size:13.9px;color:#5c5c5c;">K</span>
<span class="t" style="left:917.00px;top:233.64px;font-size:14.6px;color:#13693a;font-weight:700;">L</span>
<span class="t" style="left:979.50px;top:234.33px;font-size:13.9px;color:#5c5c5c;">M</span>
<span class="t" style="left:1044.50px;top:234.33px;font-size:13.9px;color:#5c5c5c;">N</span>
<span class="t" style="left:1108.00px;top:234.33px;font-size:13.9px;color:#5c5c5c;">O</span>
<span class="t" style="left:1172.50px;top:234.33px;font-size:13.9px;color:#5c5c5c;">P</span>
<span class="t" style="left:1236.00px;top:234.33px;font-size:13.9px;color:#5c5c5c;">Q</span>
<div class="a" style="left:0;top:252px;width:36px;height:637px;overflow:hidden">
<span class="t" style="left:13.60px;top:2.66px;font-size:13.4px;color:#5c5c5c;">1</span>
<span class="t" style="left:14.10px;top:21.66px;font-size:13.4px;color:#5c5c5c;">2</span>
<span class="t" style="left:14.10px;top:40.66px;font-size:13.4px;color:#5c5c5c;">3</span>
<span class="t" style="left:13.60px;top:59.66px;font-size:13.4px;color:#5c5c5c;">4</span>
<span class="t" style="left:14.10px;top:78.66px;font-size:13.4px;color:#5c5c5c;">5</span>
<span class="t" style="left:14.10px;top:97.66px;font-size:13.4px;color:#5c5c5c;">6</span>
<span class="t" style="left:14.10px;top:116.66px;font-size:13.4px;color:#5c5c5c;">7</span>
<span class="t" style="left:14.10px;top:135.66px;font-size:13.4px;color:#5c5c5c;">8</span>
<span class="t" style="left:14.10px;top:154.66px;font-size:13.4px;color:#5c5c5c;">9</span>
<span class="t" style="left:10.95px;top:172.81px;font-size:14.4px;color:#13693a;font-weight:700;transform:scaleX(0.8561);transform-origin:0 0;">10</span>
<span class="t" style="left:10.37px;top:192.66px;font-size:13.4px;color:#5c5c5c;">11</span>
<span class="t" style="left:9.88px;top:211.66px;font-size:13.4px;color:#5c5c5c;">12</span>
<span class="t" style="left:9.88px;top:230.66px;font-size:13.4px;color:#5c5c5c;">13</span>
<span class="t" style="left:9.38px;top:252.66px;font-size:13.4px;color:#5c5c5c;">14</span>
<span class="t" style="left:9.88px;top:271.66px;font-size:13.4px;color:#5c5c5c;">15</span>
<span class="t" style="left:9.88px;top:290.66px;font-size:13.4px;color:#5c5c5c;">16</span>
<span class="t" style="left:9.88px;top:309.66px;font-size:13.4px;color:#5c5c5c;">17</span>
<span class="t" style="left:9.88px;top:328.66px;font-size:13.4px;color:#5c5c5c;">18</span>
<span class="t" style="left:9.88px;top:347.66px;font-size:13.4px;color:#5c5c5c;">19</span>
<span class="t" style="left:10.38px;top:366.66px;font-size:13.4px;color:#5c5c5c;">20</span>
<span class="t" style="left:10.38px;top:385.66px;font-size:13.4px;color:#5c5c5c;">21</span>
<span class="t" style="left:10.38px;top:404.66px;font-size:13.4px;color:#5c5c5c;">22</span>
<span class="t" style="left:10.38px;top:423.66px;font-size:13.4px;color:#5c5c5c;">23</span>
<span class="t" style="left:9.88px;top:442.66px;font-size:13.4px;color:#5c5c5c;">24</span>
<span class="t" style="left:10.38px;top:461.66px;font-size:13.4px;color:#5c5c5c;">25</span>
<span class="t" style="left:10.38px;top:480.66px;font-size:13.4px;color:#5c5c5c;">26</span>
<span class="t" style="left:10.38px;top:499.66px;font-size:13.4px;color:#5c5c5c;">27</span>
<span class="t" style="left:10.38px;top:518.66px;font-size:13.4px;color:#5c5c5c;">28</span>
<span class="t" style="left:10.38px;top:537.66px;font-size:13.4px;color:#5c5c5c;">29</span>
<span class="t" style="left:10.38px;top:556.66px;font-size:13.4px;color:#5c5c5c;">30</span>
<span class="t" style="left:10.38px;top:575.66px;font-size:13.4px;color:#5c5c5c;">31</span>
<span class="t" style="left:10.38px;top:594.66px;font-size:13.4px;color:#5c5c5c;">32</span>
<span class="t" style="left:10.38px;top:613.66px;font-size:13.4px;color:#5c5c5c;">33</span>
<span class="t" style="left:9.88px;top:632.66px;font-size:13.4px;color:#5c5c5c;">34</span>
</div>
<div class="a" style="left:888px;top:250px;width:67px;height:2px;background:#0b6433"></div>
<div class="a" style="left:35px;top:421px;width:2px;height:22px;background:#0b6433"></div>
<span class="t" style="left:38.55px;top:254.83px;font-size:13.2px;color:#000;transform:scaleX(1.0466);transform-origin:0 0;">Inventory</span>
<span class="t" style="left:39.40px;top:273.83px;font-size:13.2px;color:#000;transform:scaleX(0.9747);transform-origin:0 0;">Apples</span>
<span class="t" style="left:38.74px;top:292.83px;font-size:13.2px;color:#000;transform:scaleX(0.9598);transform-origin:0 0;">Bananas</span>
<span class="t" style="left:38.90px;top:311.83px;font-size:13.2px;color:#000;transform:scaleX(0.9507);transform-origin:0 0;">Grapes</span>
<span class="t" style="left:38.67px;top:330.83px;font-size:13.2px;color:#000;transform:scaleX(1.0326);transform-origin:0 0;">Nectarine</span>
<span class="t" style="left:38.75px;top:349.83px;font-size:13.2px;color:#000;transform:scaleX(0.9485);transform-origin:0 0;">Peach</span>
<span class="t" style="left:38.78px;top:368.83px;font-size:13.2px;color:#000;transform:scaleX(0.9245);transform-origin:0 0;">Pears</span>
<span class="t" style="left:38.90px;top:387.83px;font-size:13.2px;color:#000;transform:scaleX(0.9876);transform-origin:0 0;">Carrots</span>
<span class="t" style="left:38.90px;top:406.83px;font-size:13.2px;color:#000;transform:scaleX(0.9737);transform-origin:0 0;">Celery</span>
<span class="t" style="left:38.90px;top:425.83px;font-size:13.2px;color:#000;transform:scaleX(0.9760);transform-origin:0 0;">Cucumbers</span>
<span class="t" style="left:38.76px;top:444.83px;font-size:13.2px;color:#000;transform:scaleX(0.9433);transform-origin:0 0;">Radishes</span>
<span class="t" style="left:39.20px;top:463.83px;font-size:13.2px;color:#000;transform:scaleX(0.9934);transform-origin:0 0;">Tomatoes</span>
<span class="t" style="left:39.30px;top:482.83px;font-size:13.2px;color:#000;transform:scaleX(0.9962);transform-origin:0 0;">Total Produce</span>
<span class="t" style="left:38.68px;top:523.83px;font-size:13.2px;color:#000;transform:scaleX(1.0164);transform-origin:0 0;">Fruit Produce</span>
<span class="t" style="left:39.30px;top:542.83px;font-size:13.2px;color:#000;transform:scaleX(0.9945);transform-origin:0 0;">Vegetable Produce</span>
<span class="t" style="left:39.30px;top:580.83px;font-size:13.2px;color:#000;transform:scaleX(0.9915);transform-origin:0 0;">Average of Produce</span>
<span class="t" style="left:39.30px;top:599.83px;font-size:13.2px;color:#000;">Average of Fruit</span>
<span class="t" style="left:39.30px;top:618.83px;font-size:13.2px;color:#000;transform:scaleX(0.9852);transform-origin:0 0;">Average of Vegetables</span>
<span class="t" style="left:189.30px;top:254.83px;font-size:13.2px;color:#000;transform:scaleX(0.9697);transform-origin:0 0;">Type</span>
<span class="t" style="left:188.75px;top:273.83px;font-size:13.2px;color:#000;transform:scaleX(1.0462);transform-origin:0 0;">Fruit</span>
<span class="t" style="left:188.75px;top:292.83px;font-size:13.2px;color:#000;transform:scaleX(1.0462);transform-origin:0 0;">Fruit</span>
<span class="t" style="left:188.75px;top:311.83px;font-size:13.2px;color:#000;transform:scaleX(1.0462);transform-origin:0 0;">Fruit</span>
<span class="t" style="left:188.75px;top:330.83px;font-size:13.2px;color:#000;transform:scaleX(1.0462);transform-origin:0 0;">Fruit</span>
<span class="t" style="left:188.75px;top:349.83px;font-size:13.2px;color:#000;transform:scaleX(1.0462);transform-origin:0 0;">Fruit</span>
<span class="t" style="left:188.75px;top:368.83px;font-size:13.2px;color:#000;transform:scaleX(1.0462);transform-origin:0 0;">Fruit</span>
<span class="t" style="left:189.40px;top:387.83px;font-size:13.2px;color:#000;transform:scaleX(0.9960);transform-origin:0 0;">Vegetable</span>
<span class="t" style="left:189.40px;top:406.83px;font-size:13.2px;color:#000;transform:scaleX(0.9960);transform-origin:0 0;">Vegetable</span>
<span class="t" style="left:189.40px;top:425.83px;font-size:13.2px;color:#000;transform:scaleX(0.9960);transform-origin:0 0;">Vegetable</span>
<span class="t" style="left:189.40px;top:444.83px;font-size:13.2px;color:#000;transform:scaleX(0.9960);transform-origin:0 0;">Vegetable</span>
<span class="t" style="left:189.40px;top:463.83px;font-size:13.2px;color:#000;transform:scaleX(0.9960);transform-origin:0 0;">Vegetable</span>
<span class="t" style="left:316.20px;top:254.83px;font-size:13.2px;color:#000;transform:scaleX(1.0353);transform-origin:0 0;">Amount</span>
<span class="t" style="left:367.30px;top:273.83px;font-size:13.2px;color:#000;">5</span>
<span class="t" style="left:367.30px;top:292.83px;font-size:13.2px;color:#000;">3</span>
<span class="t" style="left:367.30px;top:311.83px;font-size:13.2px;color:#000;">4</span>
<span class="t" style="left:367.30px;top:330.83px;font-size:13.2px;color:#000;">7</span>
<span class="t" style="left:367.30px;top:349.83px;font-size:13.2px;color:#000;">1</span>
<span class="t" style="left:367.30px;top:368.83px;font-size:13.2px;color:#000;">8</span>
<span class="t" style="left:367.30px;top:387.83px;font-size:13.2px;color:#000;">5</span>
<span class="t" style="left:367.30px;top:406.83px;font-size:13.2px;color:#000;">6</span>
<span class="t" style="left:367.30px;top:425.83px;font-size:13.2px;color:#000;">9</span>
<span class="t" style="left:367.30px;top:444.83px;font-size:13.2px;color:#000;">2</span>
<span class="t" style="left:367.30px;top:463.83px;font-size:13.2px;color:#000;">2</span>
<span class="t" style="left:359.97px;top:482.83px;font-size:13.2px;color:#000;">52</span>
<div class="a" style="left:888px;top:421px;width:67px;height:22px;border:2px solid #0b6433;box-shadow:0 0 0 1px #fff"></div>
<div class="a" style="left:951px;top:439px;width:6px;height:6px;background:#fff"></div>
<div class="a" style="left:952px;top:440px;width:4px;height:4px;background:#0b6433"></div>
<div class="a" style="left:1264px;top:252px;width:15px;height:637px;background:#f1f1f1"></div>
<svg style="left:1268px;top:258px" width="8" height="4" viewBox="0 0 8 4"><path d="M0 4 L4 0 L8 4 Z" fill="#a3a3a3"/></svg>
<div class="a" style="left:1266px;top:267px;width:11px;height:343px;background:#c1c1c1"></div>
<svg style="left:1268px;top:879px" width="8" height="4" viewBox="0 0 8 4"><path d="M0 0 L4 4 L8 0 Z" fill="#505050"/></svg>

<!-- ===== Bottom ===== -->
<div class="a" style="left:0;top:889px;width:1280px;height:48px;background:#f3f3f3"></div>
<div class="a" style="left:37px;top:889px;width:1227px;height:15px;background:#f1f1f1"></div>
<svg style="left:42px;top:893px" width="4.500" height="7" viewBox="0 0 4.500 7"><path d="M4.500 0 V7 L0 3.500 Z" fill="#7f7f7f"/></svg>
<div class="a" style="left:52px;top:891px;width:255px;height:11px;background:#c1c1c1"></div>
<svg style="left:1254.500px;top:893px" width="4.500" height="7" viewBox="0 0 4.500 7"><path d="M0 0 V7 L4.500 3.500 Z" fill="#505050"/></svg>
<div class="a" style="left:1264px;top:889px;width:15px;height:15px;background:#dcdcdc"></div>
<div class="a" style="left:0;top:936px;width:1280px;height:1px;background:#e1e1e1"></div>
<div class="a" style="left:0;top:937px;width:1280px;height:22px;background:#fff"></div>
<div class="a" style="left:1279px;top:0;width:1px;height:960px;background:#1e1e1f"></div>
<div class="a" style="left:0;top:959px;width:1280px;height:1px;background:#1b1b1b"></div>
<svg style="left:12.800px;top:914px" width="6" height="11" viewBox="0 0 6 11"><path d="M5.400 0.500 L0.700 5.500 L5.400 10.500" fill="none" stroke="#c0c0c0" stroke-width="1.100"/></svg>
<svg style="left:45.600px;top:914px" width="6" height="11" viewBox="0 0 6 11"><path d="M0.600 0.500 L5.300 5.500 L0.600 10.500" fill="none" stroke="#c0c0c0" stroke-width="1.100"/></svg>
<svg style="left:74px;top:915px" width="12.500" height="9" viewBox="0 0 12.500 9"><path d="M0 0.500 H12.500 M0 4.500 H12.500 M0 8.500 H12.500" stroke="#333" stroke-width="1"/></svg>
<span class="t" style="left:105.40px;top:911.56px;font-size:13.4px;color:#444;transform:scaleX(1.0137);transform-origin:0 0;">Vlookup</span>
<span class="t" style="left:171.48px;top:911.56px;font-size:13.4px;color:#444;transform:scaleX(1.0177);transform-origin:0 0;">HlookupPlan</span>
<span class="t" style="left:266.48px;top:911.56px;font-size:13.4px;color:#444;transform:scaleX(1.0223);transform-origin:0 0;">Match</span>
<span class="t" style="left:322.00px;top:911.56px;font-size:13.4px;color:#444;transform:scaleX(0.9801);transform-origin:0 0;">Choose</span>
<span class="t" style="left:385.00px;top:911.56px;font-size:13.4px;color:#212121;font-weight:700;transform:scaleX(0.9290);transform-origin:0 0;">SUM</span>
<span class="t" style="left:430.50px;top:911.56px;font-size:13.4px;color:#444;transform:scaleX(1.0187);transform-origin:0 0;">AverageIF</span>
<span class="t" style="left:511.30px;top:911.56px;font-size:13.4px;color:#444;transform:scaleX(0.9656);transform-origin:0 0;">COUNTA</span>
<span class="t" style="left:583.00px;top:911.56px;font-size:13.4px;color:#444;transform:scaleX(0.9608);transform-origin:0 0;">COUNTIF</span>
<span class="t" style="left:658.80px;top:911.56px;font-size:13.4px;color:#444;transform:scaleX(1.0549);transform-origin:0 0;">Text</span>
<div class="a" style="left:385px;top:933px;width:28px;height:3px;background:#107c41"></div>
<svg style="left:705px;top:913.700px" width="11" height="11" viewBox="0 0 11 11"><path d="M5.500 0 V11 M0 5.500 H11" stroke="#3b3b3b" stroke-width="1.100"/></svg>
<span class="t" style="left:14.40px;top:943.03px;font-size:10.6px;color:#444;transform:scaleX(1.0432);transform-origin:0 0;">Calculation Mode: Automatic</span>
<span class="t" style="left:174.30px;top:943.03px;font-size:10.6px;color:#444;transform:scaleX(1.0321);transform-origin:0 0;">Workbook Statistics</span>
<svg style="left:979.2px;top:946.8px" width="5.6" height="3.4" viewBox="0 0 5.6 3.4"><path d="M0.4 0.4 L2.8 2.9 L5.199999999999999 0.4" fill="none" stroke="#444" stroke-width="1.2"/></svg>
<span class="t" style="left:1024.50px;top:943.03px;font-size:10.6px;color:#444;transform:scaleX(1.0272);transform-origin:0 0;">Give Feedback to Microsoft</span>
<svg style="left:1197px;top:942.500px" width="11" height="11" viewBox="0 0 11 11"><path d="M0 5.500 H11" stroke="#3b3b3b" stroke-width="1.100"/></svg>
<svg style="left:1251px;top:942.500px" width="11" height="11" viewBox="0 0 11 11"><path d="M5.500 0 V11 M0 5.500 H11" stroke="#3b3b3b" stroke-width="1.100"/></svg>
<span class="t" style="left:1217.60px;top:943.03px;font-size:10.6px;color:#444;transform:scaleX(0.9467);transform-origin:0 0;">100%</span>
</div></body></html>
